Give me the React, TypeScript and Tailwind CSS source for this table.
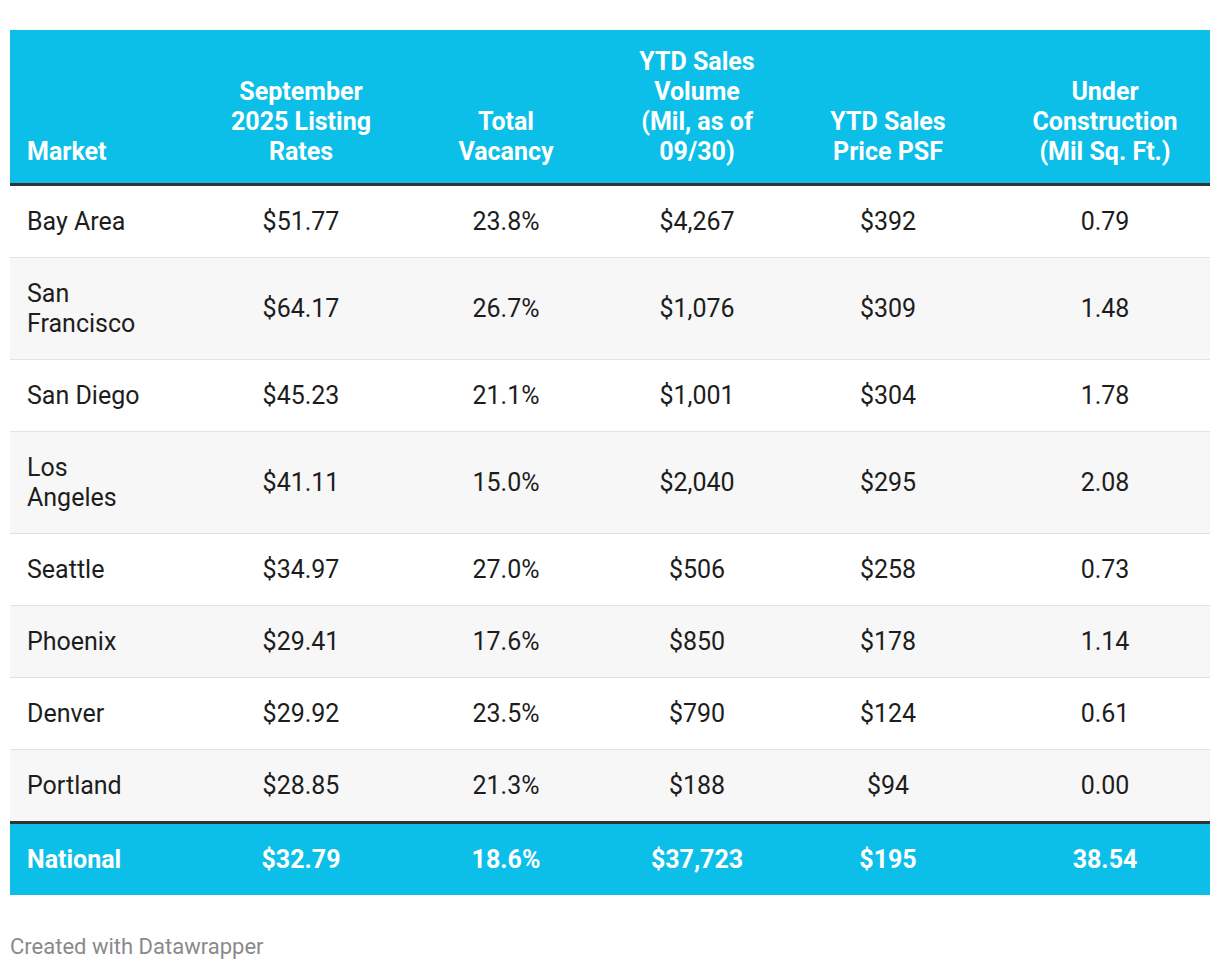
import React from "react";

type Row = { market: string[]; rate: string; vacancy: string; volume: string; psf: string; construction: string };

const rows: Row[] = [
  { market: ["Bay Area"], rate: "$51.77", vacancy: "23.8%", volume: "$4,267", psf: "$392", construction: "0.79" },
  { market: ["San", "Francisco"], rate: "$64.17", vacancy: "26.7%", volume: "$1,076", psf: "$309", construction: "1.48" },
  { market: ["San Diego"], rate: "$45.23", vacancy: "21.1%", volume: "$1,001", psf: "$304", construction: "1.78" },
  { market: ["Los", "Angeles"], rate: "$41.11", vacancy: "15.0%", volume: "$2,040", psf: "$295", construction: "2.08" },
  { market: ["Seattle"], rate: "$34.97", vacancy: "27.0%", volume: "$506", psf: "$258", construction: "0.73" },
  { market: ["Phoenix"], rate: "$29.41", vacancy: "17.6%", volume: "$850", psf: "$178", construction: "1.14" },
  { market: ["Denver"], rate: "$29.92", vacancy: "23.5%", volume: "$790", psf: "$124", construction: "0.61" },
  { market: ["Portland"], rate: "$28.85", vacancy: "21.3%", volume: "$188", psf: "$94", construction: "0.00" },
];

const headers: string[][] = [
  ["Market"],
  ["September", "2025 Listing", "Rates"],
  ["Total", "Vacancy"],
  ["YTD Sales", "Volume", "(Mil, as of", "09/30)"],
  ["YTD Sales", "Price PSF"],
  ["Under", "Construction", "(Mil Sq. Ft.)"],
];

function Lines({ lines }: { lines: string[] }) {
  return (
    <>
      {lines.map((l, i) => (
        <span key={i} className="block whitespace-nowrap">
          {l}
        </span>
      ))}
    </>
  );
}

export default function App() {
  return (
    <div
      className="min-h-[970px] bg-white px-[10px] pt-[30px] text-[25px] leading-[30px] text-[#1d1d1d]"
      style={{ fontFamily: "Roboto, 'Liberation Sans', sans-serif" }}
    >
      <table className="w-[1200px] table-fixed border-collapse">
        <colgroup>
          <col className="w-[198px]" />
          <col className="w-[186px]" />
          <col className="w-[224px]" />
          <col className="w-[158px]" />
          <col className="w-[224px]" />
          <col className="w-[210px]" />
        </colgroup>
        <thead>
          <tr className="border-b-[3px] border-[#333333] bg-[#0cbfe9] text-white">
            {headers.map((h, i) => (
              <th
                key={i}
                className={
                  "pt-[17px] pb-[16px] align-bottom font-bold " +
                  (i === 0 ? "pl-[17px] text-left" : "text-center")
                }
              >
                <Lines lines={h} />
              </th>
            ))}
          </tr>
        </thead>
        <tbody>
          {rows.map((r, i) => (
            <tr
              key={r.rate}
              className={
                (i % 2 === 1 ? "bg-[#f7f7f7] " : "bg-white ") +
                (i === rows.length - 1 ? "" : "border-b border-[#e3e3e3]")
              }
            >
              <td className="pt-[21px] pb-[20px] pl-[17px] text-left">
                <Lines lines={r.market} />
              </td>
              <td className="text-center">{r.rate}</td>
              <td className="text-center">{r.vacancy}</td>
              <td className="text-center">{r.volume}</td>
              <td className="text-center">{r.psf}</td>
              <td className="text-center">{r.construction}</td>
            </tr>
          ))}
        </tbody>
        <tfoot>
          <tr className="border-t-[3px] border-[#333333] bg-[#0cbfe9] font-bold text-white">
            <td className="pt-[21px] pb-[20px] pl-[17px] text-left">National</td>
            <td className="text-center">$32.79</td>
            <td className="text-center">18.6%</td>
            <td className="text-center">$37,723</td>
            <td className="text-center">$195</td>
            <td className="text-center">38.54</td>
          </tr>
        </tfoot>
      </table>
      <p className="mt-[39px] text-[22px] leading-[26px] text-[#8a8a8a]">Created with Datawrapper</p>
    </div>
  );
}
